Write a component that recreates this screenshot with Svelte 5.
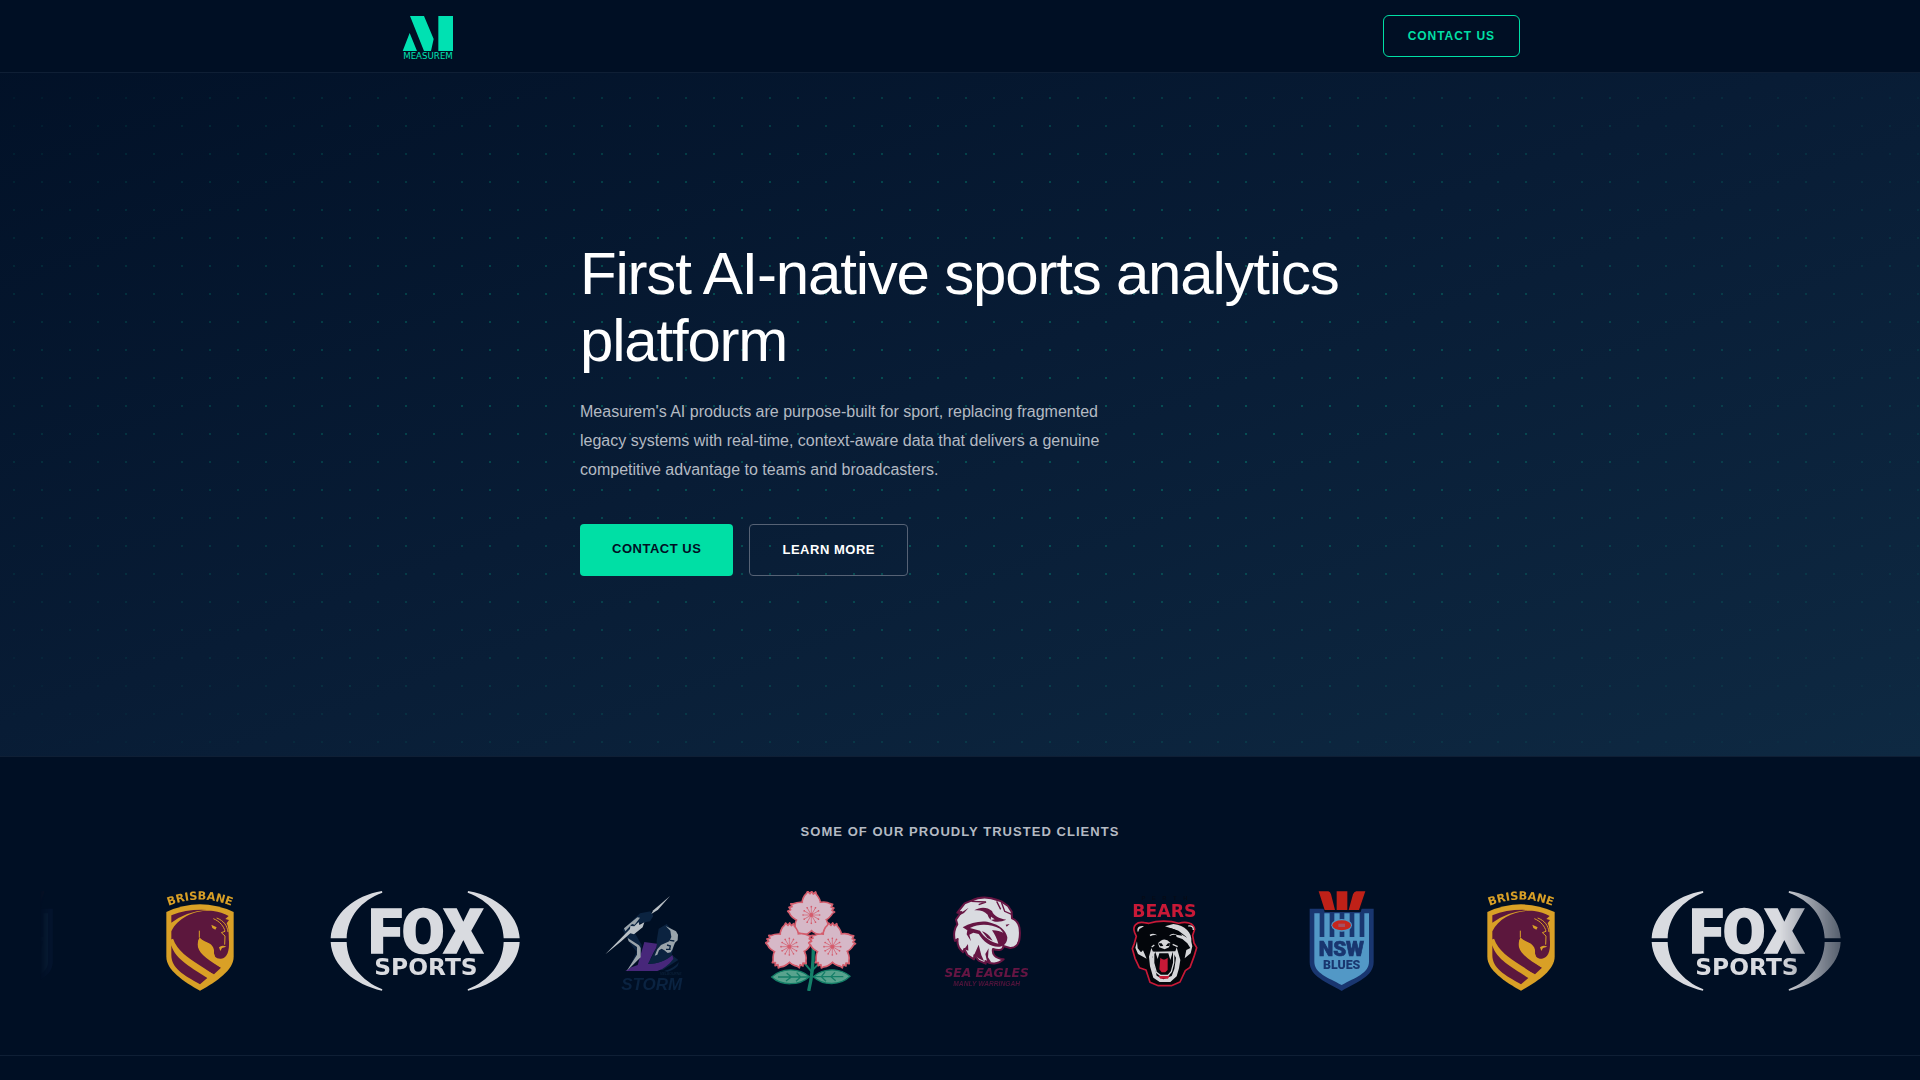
<script lang="ts">
  type Client = "nsw" | "brisbane" | "fox" | "storm" | "sakura" | "eagles" | "bears";

  const track: Client[] = [
    "nsw",
    "brisbane",
    "fox",
    "storm",
    "sakura",
    "eagles",
    "bears",
    "nsw",
    "brisbane",
    "fox",
  ];

  const blossoms = [
    { x: 184, y: 105 },
    { x: 118, y: 200 },
    { x: 247, y: 200 },
  ];
  const petals = [0, 72, 144, 216, 288];
  const stamens = [0, 30, 60, 90, 120, 150, 180, 210, 240, 270, 300, 330];
</script>

<svelte:head>
  <title>Measurem</title>
</svelte:head>

{#snippet brisbane(id: string)}
  <svg class="logo" viewBox="450 93 300 300" width="100" height="100" role="img" aria-label="Brisbane">
    <defs><path {id} d="M495 142Q600 96 705 142" /></defs>
    <text class="wide" fill="#d9a026" font-size="34" text-anchor="middle">
      <textPath href="#{id}" startOffset="50%">BRISBANE</textPath>
    </text>
    <path fill="#d9a026" d="M499 156Q600 110 701 156V290C701 330 650 364 600 392C550 364 499 330 499 290Z" />
    <path fill="#5c173d" d="M514 166Q562 147 620 150Q560 154 514 188Z" />
    <path
      fill="#5c173d"
      d="M514 214C535 170 590 148 640 153C656 155 672 161 686 168L676 177L687 180L680 190C687 202 686 228 687 245C688 270 683 294 663 296C648 297 640 288 642 273C635 256 630 250 612 245C606 241 602 238 599 233C587 252 598 272 617 290L663 323L642 343C592 318 535 290 514 239Z"
    />
    <path fill="#5c173d" d="M514 256C526 300 580 326 622 354L600 373C552 346 514 325 514 286Z" />
    <path fill="none" stroke="#d9a026" stroke-width="11" d="M514 238C532 290 590 313 634 346" />
    <path fill="#d9a026" d="M599 233C608 242 620 246 630 251C641 260 643 268 642 280L646 296L663 323C630 304 600 284 594 262C592 250 594 240 599 233Z" />
    <path fill="#d9a026" d="M634 194L650 202L646 209L637 204ZM657 262Q666 254 679 260L666 264L661 273Z" />
    <path
      fill="none"
      stroke="#d9a026"
      stroke-width="3"
      d="M598 212V233M640 176C660 184 672 200 675 214L664 218L675 228L674 254M650 174C672 182 682 198 684 216"
    />
  </svg>
{/snippet}

{#snippet fox()}
  <svg class="logo" viewBox="60 63 570 300" width="190" height="100" role="img" aria-label="Fox Sports">
    <g fill="#d9dbe0">
      <path d="M62 205C66 132 134 76 216 63L217 68C154 91 112 140 110 205Z" />
      <path d="M62 216C66 288 134 344 216 362L217 358C154 332 112 282 110 216Z" />
      <path d="M629 205C625 132 556 76 474 63L473 68C537 91 579 140 581 205Z" />
      <path d="M629 216C625 288 556 344 474 362L473 358C537 332 579 282 581 216Z" />
      <text class="fox-word" x="347" y="249" font-size="184" text-anchor="middle">FOX</text>
      <text class="wide" x="348" y="314" font-size="70" text-anchor="middle">SPORTS</text>
    </g>
  </svg>
{/snippet}

{#snippet storm()}
  <svg class="logo" viewBox="30 33 255 300" width="85" height="100" role="img" aria-label="Melbourne Storm">
    <path fill="#0b2340" d="M98 150L150 100L182 94L190 108L180 124L150 130L135 160L155 195L152 230L112 275L140 215L120 190Z" />
    <path fill="#0b2340" d="M200 182L206 146L230 132L242 146L245 180L255 185L245 224L265 240L218 270L150 258L200 225Z" />
    <path fill="#47277a" d="M163 186L201 191L199 203C185 226 180 242 174 252C205 252 228 241 247 225L250 237C236 255 220 267 202 273H106L124 262L143 255Z" />
    <path fill="#0b2340" d="M222 273C242 268 256 259 267 246L263 258C253 268 243 273 232 275Z" />
    <path fill="#0b2340" d="M200 202L174 252C200 252 226 243 247 225L236 219L222 211L203 226Z" />
    <path fill="#b9c0c6" d="M46 223L120 147L121 138L133 139L146 126L148 135L163 127L158 142L132 163L121 160L94 184Z" />
    <path fill="#b9c0c6" d="M184 102L190 91L240 48L204 89Z" />
    <path fill="#9aa4ab" d="M102 145L142 112L150 113L134 134L126 132L106 154ZM113 174L147 196L152 204V232L110 273L141 224V201L116 184Z" />
    <path
      fill="#9aa4ab"
      d="M227 138L258 154L264 164L263 181L255 188L251 198L247 209L242 217L233 219L223 211L215 206L207 211L202 224L194 227L202 208L213 195L238 184L244 171L241 152Z"
    />
    <path fill="none" stroke="#0b2340" stroke-width="4" d="M240 181L253 183M231 195L241 198L239 207M228 208H242" />
    <text class="italic" x="242" y="284" fill="#0a2038" font-size="10" text-anchor="middle">MELBOURNE</text>
    <text class="italic" x="185" y="329" fill="#0a2341" font-size="51" text-anchor="middle">STORM</text>
  </svg>
{/snippet}

{#snippet sakura()}
  <svg class="logo" viewBox="45 33 285 300" width="95" height="100" role="img" aria-label="Japan cherry blossoms">
    <path fill="none" stroke="#147f68" stroke-width="10" d="M190 205C190 260 184 300 176 333" />
    <path fill="none" stroke="#147f68" stroke-width="6" d="M164 250L184 274L207 250" />
    <g fill="#58a38e" stroke="#147f68" stroke-width="4">
      <path d="M65 291C94 264 146 262 178 290C148 318 94 318 65 291Z" />
      <path d="M300 289C272 264 222 262 190 290C220 318 272 317 300 289Z" />
      <path fill="none" d="M84 291H176M110 279L124 291L108 303M140 278L152 291L138 304M280 290H192M255 277L243 290L257 302M225 276L214 290L228 304" />
    </g>
    {#each blossoms as b}
      <g transform="translate({b.x} {b.y})">
        <g fill="#d6b8c7" stroke="#d45c6c" stroke-width="5" stroke-linejoin="round">
          {#each petals as angle}
            <path transform="rotate({angle})" d="M0 0L-29 -28C-28 -44 -24 -57 -15 -64L-11 -71L-4 -64L1 -71L6 -63L13 -69L15 -62C24 -52 28 -42 29 -28Z" />
          {/each}
        </g>
        <g fill="#d6b8c7">
          {#each petals as angle}
            <path transform="rotate({angle})" d="M0 0L-26 -32C-24 -44 -20 -52 -13 -59H12C20 -52 24 -44 26 -32Z" />
          {/each}
          <path d="M0 39L37 12L23 -32H-23L-37 12Z" />
        </g>
        {#each stamens as angle}
          <g transform="rotate({angle})">
            <path stroke="#d45c6c" stroke-width="2" d="M0 0V-25" />
            <circle cy="-25" r="2.5" fill="#d45c6c" />
          </g>
        {/each}
        <circle r="6" fill="#d45c6c" />
      </g>
    {/each}
  </svg>
{/snippet}

{#snippet eagles()}
  <svg class="logo" viewBox="60 33 285 300" width="95" height="100" role="img" aria-label="Sea Eagles Manly Warringah">
    <path
      fill="#d9dbe0"
      stroke="#661543"
      stroke-width="6"
      stroke-linejoin="round"
      d="M112 98L134 70L156 61C178 49 209 50 232 60L244 64L264 78L275 95L276 115C296 122 302 145 299 172C298 193 286 205 270 204L250 198C249 214 230 211 219 207C216 222 224 235 251 238C234 254 212 254 196 243L197 251L176 242L163 226L162 238L142 225L133 207L129 217C115 205 111 190 113 177L105 183C99 163 104 143 112 133L108 119L124 96Z"
    />
    <g fill="#661543">
      <path d="M128 142C155 126 190 120 212 128C236 134 258 150 262 172C262 188 252 199 240 200C214 203 192 187 176 162L160 158L148 164L153 184L140 163L142 151Z" />
      <path d="M163 91C181 79 203 81 216 93C221 107 237 116 259 119L246 124C224 129 207 121 203 104C193 93 178 89 163 91Z" />
      <path d="M113 98L128 95L146 83L132 99L119 106ZM133 207L144 192L145 212ZM162 226L176 194L184 226L192 243L178 236ZM196 222L206 205L204 232L213 246L202 248Z" />
    </g>
    <path fill="#d9dbe0" d="M213 110L224 118L212 120ZM150 144C178 130 212 132 240 146L250 158C240 154 228 150 216 151C224 162 231 176 235 191C214 187 190 170 180 152Z" />
    <path fill="#661543" d="M186 154C198 157 210 168 218 182L202 174ZM257 134L269 132L260 140Z" />
    <path fill="none" stroke="#661543" stroke-width="4" d="M230 64L242 88M244 66L254 94L275 103M154 64L198 66L176 74" />
    <text class="italic wide" x="200" y="291" fill="#661543" font-size="37" text-anchor="middle">SEA EAGLES</text>
    <text class="italic" x="200" y="317" fill="#50143b" font-size="20" text-anchor="middle">MANLY WARRINGAH</text>
  </svg>
{/snippet}

{#snippet bears()}
  <svg class="logo" viewBox="15 33 300 300" width="100" height="100" role="img" aria-label="Perth Bears">
    <text x="173" y="61" fill="#070b15" font-size="17" text-anchor="middle" letter-spacing="20">PERTH</text>
    <text class="wide" x="163" y="110" fill="#c81937" font-size="52" text-anchor="middle">BEARS</text>
    <path
      fill="#03060b"
      stroke="#c81937"
      stroke-width="5"
      stroke-linejoin="round"
      d="M74 158C66 137 80 124 103 128L117 130C143 121 179 121 206 130C227 123 252 128 254 148L248 166L252 189L260 203L252 230L240 262L226 272L210 306L184 317H145L120 307L108 270L88 263L75 235L67 206L73 190L79 169Z"
    />
    <g fill="#d5d6d9">
      <path d="M84 157C78 145 87 135 102 139L88 147ZM81 184L83 205L93 217L99 211L110 236L84 222L76 203ZM124 204L129 215L196 214L200 202L211 240L207 265L200 289L181 306H149L130 293L120 259L117 230Z" />
      <path d="M165 139L190 132C225 136 247 158 244 185L247 199L242 220L224 235L229 210L241 204L232 190L217 177L200 171L198 164L217 167L207 153Z" />
      <path d="M119 164Q131 157 142 166Q132 163 121 169ZM178 166Q190 157 202 166Q190 162 180 168Z" />
      <path d="M144 190Q162 168 181 188L177 202L164 208L148 202Z" />
    </g>
    <path fill="#03060b" d="M136 216L143 237L148 220H175L181 240L188 217L198 233L193 267L185 288L160 298L140 287L133 258L128 230ZM175 143C196 146 216 157 232 174L214 163L199 162ZM145 190H155L160 198L151 199ZM167 198L174 190H181L177 198Z" />
    <path fill="#c81937" d="M151 233C158 240 166 240 173 233V270L166 277H155L148 268ZM145 287L179 286L174 296H151Z" />
    <path fill="none" stroke="#d5d6d9" stroke-width="4" d="M131 215V249L139 277L151 286H174L184 275L191 249V219M133 195L125 201M188 193L203 200M250 150Q251 136 235 138" />
  </svg>
{/snippet}

{#snippet nsw()}
  <svg class="logo" viewBox="15 33 288 300" width="96" height="100" role="img" aria-label="NSW Blues">
    <path fill="#193670" d="M59 86H251V246C251 290 200 306 155 333C110 306 59 290 59 246Z" />
    <path fill="#5298c6" d="M73 100H237V245C237 280 196 292 155 315C114 292 73 280 73 245Z" />
    <path stroke="#193670" stroke-width="14" d="M96 99V171M126 99V171M156 99V171M186 99V171M216 99V171" />
    <path fill="#031024" d="M82 33H230L212 96H104Z" />
    <path fill="#bf2118" d="M86 34H115Q121 36 123 43L135 90H104ZM140 34H172V90H140ZM226 34H199Q192 36 189 43L176 90H207Z" />
    <ellipse cx="155" cy="136" rx="31" ry="19" fill="#5298c6" />
    <ellipse cx="155" cy="136" rx="28" ry="15" fill="#c6261e" />
    <rect x="145" y="131" width="20" height="10" fill="#a65061" />
    <text class="heavy" x="154" y="229" fill="#193670" stroke="#193670" stroke-width="2" font-size="62" text-anchor="middle">NSW</text>
    <text class="heavy" x="155" y="267" fill="#193670" font-size="37" text-anchor="middle">BLUES</text>
  </svg>
{/snippet}

<header class="nav">
  <div class="nav-inner">
    <a class="brand" href="#top" aria-label="Measurem home">
      <svg viewBox="60 36 168 144" width="56" height="48" fill="#00e1b2" aria-hidden="true">
        <path d="M90 48H132L161 117L153 153H132ZM175 48H219V153H175ZM89 99L111 153H68Z" />
        <text class="brand-word" x="144" y="176" font-size="26" text-anchor="middle">MEASUREM</text>
      </svg>
    </a>
    <a class="nav-cta" href="#contact">Contact us</a>
  </div>
</header>

<main id="top">
  <section class="hero">
    <div class="hero-inner">
      <h1>First AI-native sports analytics platform</h1>
      <p>
        Measurem's AI products are purpose-built for sport, replacing fragmented legacy systems with
        real-time, context-aware data that delivers a genuine competitive advantage to teams and
        broadcasters.
      </p>
      <div class="actions">
        <a class="btn primary" href="#contact">Contact us</a>
        <a class="btn outline" href="#clients">Learn more</a>
      </div>
    </div>
  </section>

  <section class="clients" id="clients">
    <h2>Some of our proudly trusted clients</h2>
    <div class="marquee">
      <div class="track">
        {#each track as client, i}
          {#if client === "nsw"}{@render nsw()}
          {:else if client === "brisbane"}{@render brisbane(`arc-${i}`)}
          {:else if client === "fox"}{@render fox()}
          {:else if client === "storm"}{@render storm()}
          {:else if client === "sakura"}{@render sakura()}
          {:else if client === "eagles"}{@render eagles()}
          {:else}{@render bears()}{/if}
        {/each}
      </div>
    </div>
  </section>
</main>

<style>
  :global(body) {
    background: #000f24;
    color: #fff;
    font-family: "Liberation Sans", Arial, sans-serif;
    overflow-x: hidden;
  }

  a {
    text-decoration: none;
  }

  .nav {
    position: fixed;
    top: 0;
    left: 0;
    right: 0;
    z-index: 10;
    border-bottom: 1px solid #0f1f35;
    background: #000f24;
  }

  .nav-inner {
    display: flex;
    align-items: center;
    justify-content: space-between;
    max-width: 1120px;
    height: 72px;
    margin: 0 auto;
  }

  .brand,
  .brand svg {
    display: block;
  }

  .brand-word {
    font-family: "DejaVu Sans", sans-serif;
  }

  .nav-cta {
    padding: 10px 24px;
    border: 1px solid #00dfa5;
    border-radius: 6px;
    color: #00dfa5;
    font-size: 12px;
    font-weight: 700;
    letter-spacing: 0.08em;
    line-height: 20px;
    text-transform: uppercase;
  }

  .hero {
    position: relative;
    box-sizing: border-box;
    min-height: 70vh;
    padding: 240px 24px 0;
    background: linear-gradient(160deg, #011026 0%, #081c35 50%, #0e2942 100%);
  }

  .hero::before {
    content: "";
    position: absolute;
    inset: 0;
    background-image: radial-gradient(circle, rgba(0, 223, 165, 0.25) 1px, transparent 1px);
    background-size: 28px 28px;
    mask-image: radial-gradient(ellipse at center, #000 30%, transparent 100%);
  }

  .hero-inner {
    position: relative;
    max-width: 760px;
    margin: 0 auto;
  }

  h1 {
    margin: 0 0 23px;
    font-size: 60px;
    font-weight: 400;
    letter-spacing: -0.02em;
    line-height: 67px;
  }

  p {
    max-width: 560px;
    margin: 0 0 40px;
    color: #b4bac3;
    font-size: 16px;
    line-height: 29px;
  }

  .actions {
    display: flex;
    flex-wrap: wrap;
    gap: 16px;
  }

  .btn {
    padding: 14px 32px;
    border-radius: 4px;
    font-size: 13px;
    font-weight: 700;
    letter-spacing: 0.04em;
    line-height: 22px;
    text-transform: uppercase;
  }

  .primary {
    background: #00dfa5;
    color: #000f24;
  }

  .outline {
    border: 1px solid #566275;
    color: #fff;
  }

  .clients {
    padding: 64px 40px;
    border-top: 1px solid #0f1f35;
    border-bottom: 1px solid #0f1f35;
  }

  h2 {
    margin: 0 0 48px;
    color: #b4bac3;
    font-size: 13px;
    font-weight: 700;
    letter-spacing: 0.08em;
    line-height: 22px;
    text-align: center;
    text-transform: uppercase;
  }

  .marquee {
    overflow: hidden;
    mask-image: linear-gradient(to right, transparent, #000 100px, #000 calc(100% - 100px), transparent);
  }

  .track {
    display: flex;
    gap: 80px;
    width: max-content;
    margin-left: -66px;
  }

  .logo {
    display: block;
    flex: none;
    font-family: "Liberation Sans", Arial, sans-serif;
    font-weight: 700;
  }

  .fox-word {
    font-family: "Liberation Sans Narrow", Roboto, sans-serif;
    font-weight: 900;
    stroke: #d9dbe0;
    stroke-width: 5px;
  }

  .heavy {
    font-family: Roboto, sans-serif;
    font-weight: 900;
  }

  .italic {
    font-style: italic;
  }

  .wide {
    font-family: "DejaVu Sans", sans-serif;
  }
</style>
